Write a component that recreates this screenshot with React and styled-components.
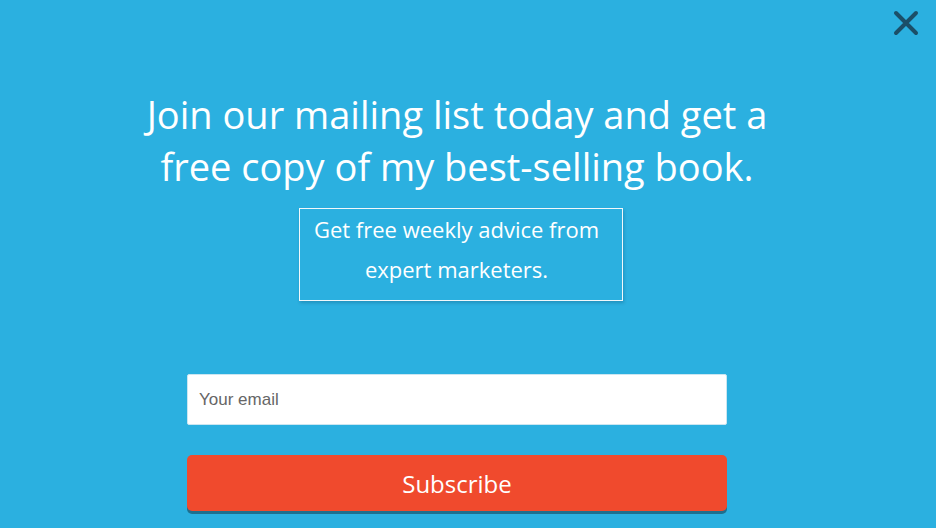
import React from "react";
import styled, { createGlobalStyle } from "styled-components";

const GlobalStyle = createGlobalStyle`
  html, body {
    margin: 0;
    padding: 0;
    background: #2bb0e0;
  }
  body {
    font-family: "Open Sans", "Liberation Sans", sans-serif;
  }
`;

const Page = styled.div`
  position: relative;
  width: 936px;
  height: 528px;
  background: #2bb0e0;
  overflow: hidden;
`;

const Column = styled.div`
  width: 914px;
  display: flex;
  flex-direction: column;
  align-items: center;
  padding-top: 88px;
`;

const Heading = styled.h1`
  margin: 0;
  width: 700px;
  font-size: 38px;
  font-weight: 400;
  line-height: 52px;
  color: #fff;
  text-align: center;
`;

const Subtitle = styled.div`
  margin-top: 16px;
  margin-left: 7px;
  width: 294px;
  padding: 0 18px 11px 10px;
  border: 1px solid #f2f8fb;
  box-shadow: 1px 2px 3px rgba(0, 60, 90, 0.25);
  font-size: 22px;
  line-height: 40px;
  color: #fff;
  text-align: center;
`;

const Form = styled.form`
  margin-top: 73px;
  width: 540px;
  display: flex;
  flex-direction: column;
  gap: 30px;
`;

const EmailInput = styled.input`
  box-sizing: border-box;
  width: 100%;
  height: 51px;
  padding: 0 11px;
  border: 1px solid #cbe6f1;
  border-radius: 2px;
  background: #fff;
  font-family: "Liberation Sans", Arial, sans-serif;
  font-size: 17px;
  color: #333;
  outline: none;
  &::placeholder {
    color: #666;
  }
`;

const SubmitButton = styled.button`
  width: 100%;
  height: 56px;
  border: none;
  border-radius: 5px;
  background: #f04a2d;
  box-shadow: 0 3px 0 #1e6f8e;
  color: #fff;
  font-family: "Open Sans", "Liberation Sans", sans-serif;
  font-size: 24px;
  cursor: pointer;
`;

const CloseButton = styled.button`
  position: absolute;
  top: 10px;
  right: 17px;
  width: 26px;
  height: 26px;
  padding: 0;
  border: none;
  background: none;
  cursor: pointer;
`;

const CloseIcon = () => (
  <svg width="26" height="26" viewBox="0 0 26 26">
    <path
      d="M3 3 L23 23 M23 3 L3 23"
      stroke="#1b4f68"
      strokeWidth="4"
      strokeLinecap="round"
    />
  </svg>
);

export default function App() {
  return (
    <Page>
      <GlobalStyle />
      <CloseButton aria-label="Close">
        <CloseIcon />
      </CloseButton>
      <Column>
        <Heading>
          Join our mailing list today and get a free copy of my best-selling book.
        </Heading>
        <Subtitle>Get free weekly advice from expert marketers.</Subtitle>
        <Form onSubmit={(e) => e.preventDefault()}>
          <EmailInput type="email" placeholder="Your email" />
          <SubmitButton type="submit">Subscribe</SubmitButton>
        </Form>
      </Column>
    </Page>
  );
}
